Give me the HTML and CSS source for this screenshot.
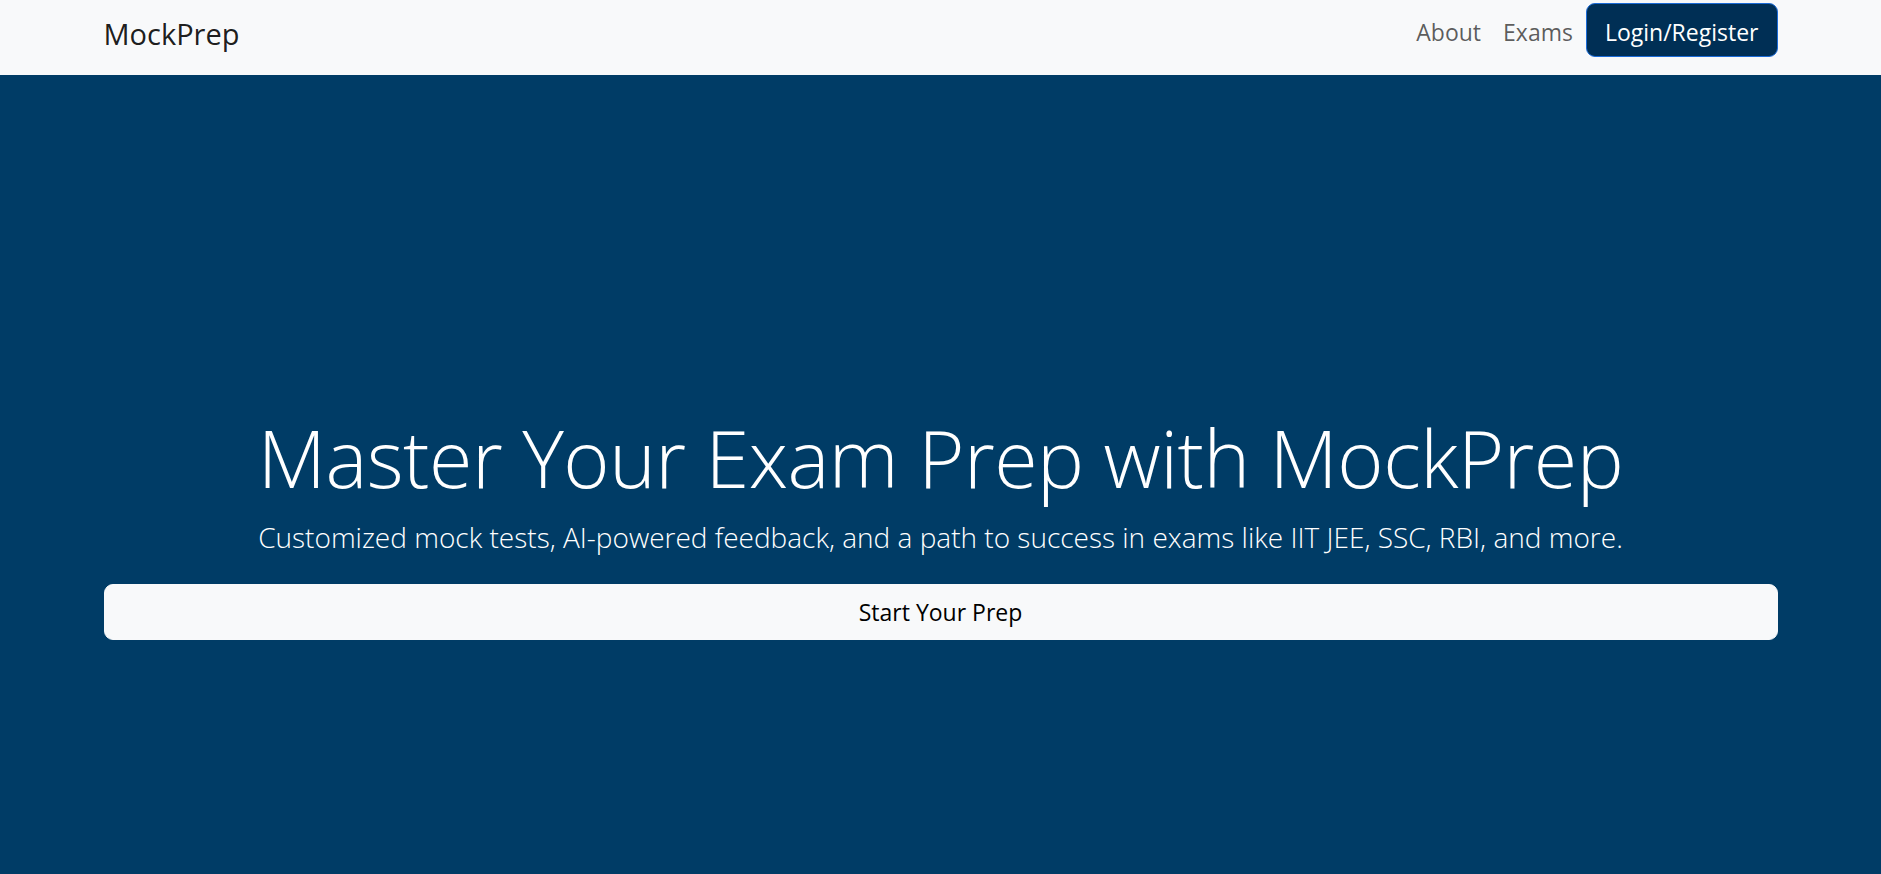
FILE: index.html
```html
<!DOCTYPE html>
<html lang="en">
<head>
<meta charset="utf-8">
<title>MockPrep</title>
<link rel="stylesheet" href="styles.css">
</head>
<body>
<header class="navbar">
  <div class="container nav-inner">
    <a class="brand" href="#">MockPrep</a>
    <nav class="nav-right">
      <a class="nav-link" href="#">About</a>
      <a class="nav-link" href="#">Exams</a>
      <a class="btn-login" href="#">Login/Register</a>
    </nav>
  </div>
</header>
<main class="hero">
  <div class="container hero-inner">
    <h1 class="hero-title">Master Your Exam Prep with MockPrep</h1>
    <p class="hero-lead">Customized mock tests, AI-powered feedback, and a path to success in exams like IIT JEE, SSC, RBI, and more.</p>
    <a class="btn-start" href="#">Start Your Prep</a>
  </div>
</main>
</body>
</html>
```
FILE: styles.css
```css
* { box-sizing: border-box; }
html, body { margin: 0; padding: 0; }
body {
  font-family: "Open Sans", "Noto Sans", sans-serif;
  background: #003c66;
  overflow: hidden;
  height: 874px;
}
a { text-decoration: none; }
.container {
  width: 1710px;
  margin: 0 auto;
  padding: 0 18px;
}
.navbar {
  background: #f8f9fa;
  height: 75px;
}
.nav-inner {
  display: flex;
  justify-content: space-between;
  align-items: flex-start;
  height: 75px;
}
.brand {
  font-size: 29px;
  color: rgba(0,0,0,0.9);
  line-height: 1;
  margin-top: 19px;
}
.nav-right {
  display: flex;
  align-items: baseline;
  margin-top: 3px;
}
.nav-link {
  font-size: 23px;
  color: rgba(0,0,0,0.65);
  padding: 0 11px;
}
.btn-login {
  font-size: 23px;
  color: #fff;
  background: #002f55;
  border: 1.5px solid #1a6bd8;
  border-radius: 9px;
  padding: 11px 18px 7px;
  line-height: 34px;
  margin-left: 2px;
}
.hero {
  background: #003c66;
  height: 799px;
}
.hero-inner {
  display: flex;
  flex-direction: column;
  align-items: center;
  padding-top: 333px;
}
.hero-title {
  font-weight: 300;
  font-size: 79px;
  line-height: 100px;
  color: #fff;
  margin: 0;
  letter-spacing: -0.5px;
}
.hero-lead {
  font-weight: 300;
  font-size: 28px;
  line-height: 42px;
  color: #fff;
  margin: 8px 0 26px;
}
.btn-start {
  align-self: stretch;
  display: block;
  text-align: center;
  background: #f8f9fa;
  color: #000;
  font-size: 23px;
  line-height: 36px;
  padding: 9px 18px;
  border: 1.5px solid #f8f9fa;
  border-radius: 9px;
}
```
